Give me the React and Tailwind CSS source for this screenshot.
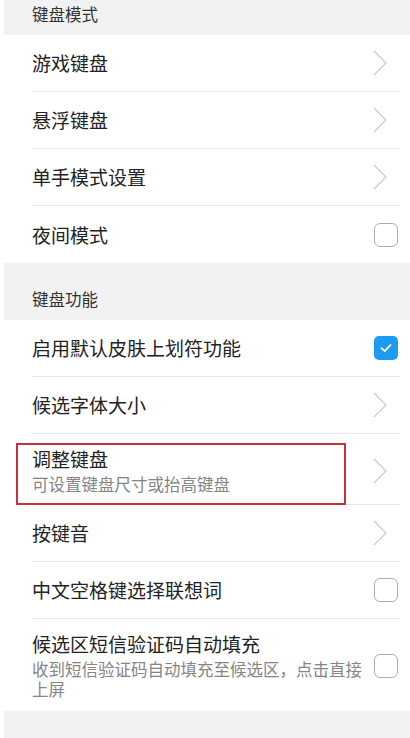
import React from 'react';

const font = { fontFamily: '"Noto Sans CJK SC", "Noto Sans", sans-serif' };

const Chevron = () => (
  <svg width="16" height="28" viewBox="0 0 16 28" className="shrink-0">
    <path d="M2 2 L14 14 L2 26" fill="none" stroke="#c8c8c8" strokeWidth="1.1" />
  </svg>
);

const Checkbox = ({ checked }) =>
  checked ? (
    <div className="w-[24px] h-[24px] rounded-[5px] bg-[#1d9bf0] flex items-center justify-center shrink-0">
      <svg width="14" height="14" viewBox="0 0 14 14">
        <path d="M2.5 7.2 L5.8 10.2 L11.5 4" fill="none" stroke="#fff" strokeWidth="1.8" strokeLinecap="round" strokeLinejoin="round" />
      </svg>
    </div>
  ) : (
    <div className="w-[24px] h-[24px] rounded-[6px] border border-[#adadad] shrink-0" />
  );

const SectionHeader = ({ title, height }) => (
  <div className={`ml-[4px] bg-[#f2f2f2] flex items-end pl-[28px] pb-[11px] ${height}`}>
    <span className="text-[16.5px] leading-[20px] text-[#333]">{title}</span>
  </div>
);

const Row = ({ title, sub, right, last }) => (
  <div className={`ml-[32px] mr-[10px] flex items-center pr-[2px] ${last ? '' : 'border-b border-[#e6e6e6]'} ${sub ? 'pt-[13px] pb-[10px]' : 'h-[57px]'}`}>
    <div className="flex-1 min-w-0 pr-[8px]">
      <div className="text-[19px] leading-[24px] text-[#222]">{title}</div>
      {sub && <div className="mt-[3px] text-[16.5px] leading-[20px] text-[#858585]">{sub}</div>}
    </div>
    {right === 'chevron' && <div className="mr-[10px]"><Chevron /></div>}
    {right === 'off' && <Checkbox checked={false} />}
    {right === 'on' && <Checkbox checked />}
  </div>
);

export default function App() {
  return (
    <div className="relative w-[410px] h-[738px] overflow-hidden bg-white" style={font}>
      <SectionHeader title="键盘模式" height="h-[35px]" />
      <Row title="游戏键盘" right="chevron" />
      <Row title="悬浮键盘" right="chevron" />
      <Row title="单手模式设置" right="chevron" />
      <Row title="夜间模式" right="off" last />
      <SectionHeader title="键盘功能" height="h-[57px]" />
      <Row title="启用默认皮肤上划符功能" right="on" />
      <Row title="候选字体大小" right="chevron" />
      <Row title="调整键盘" sub="可设置键盘尺寸或抬高键盘" right="chevron" />
      <Row title="按键音" right="chevron" />
      <Row title="中文空格键选择联想词" right="off" />
      <div className="ml-[32px] mr-[10px] flex items-center pr-[2px] pt-[13px] pb-[12px]">
        <div className="flex-1 min-w-0 pr-[8px]">
          <div className="text-[19px] leading-[24px] text-[#222]">候选区短信验证码自动填充</div>
          <div className="mt-[3px] text-[16.5px] leading-[20px] text-[#858585]">收到短信验证码自动填充至候选区，点击直接上屏</div>
        </div>
        <Checkbox checked={false} />
      </div>
      <div className="ml-[4px] bg-[#f2f2f2] h-[40px]" />

      {/* annotation */}
      <div className="absolute left-[16px] top-[443px] w-[330px] h-[62px] border-2 border-[#c9303a]" />
    </div>
  );
}
